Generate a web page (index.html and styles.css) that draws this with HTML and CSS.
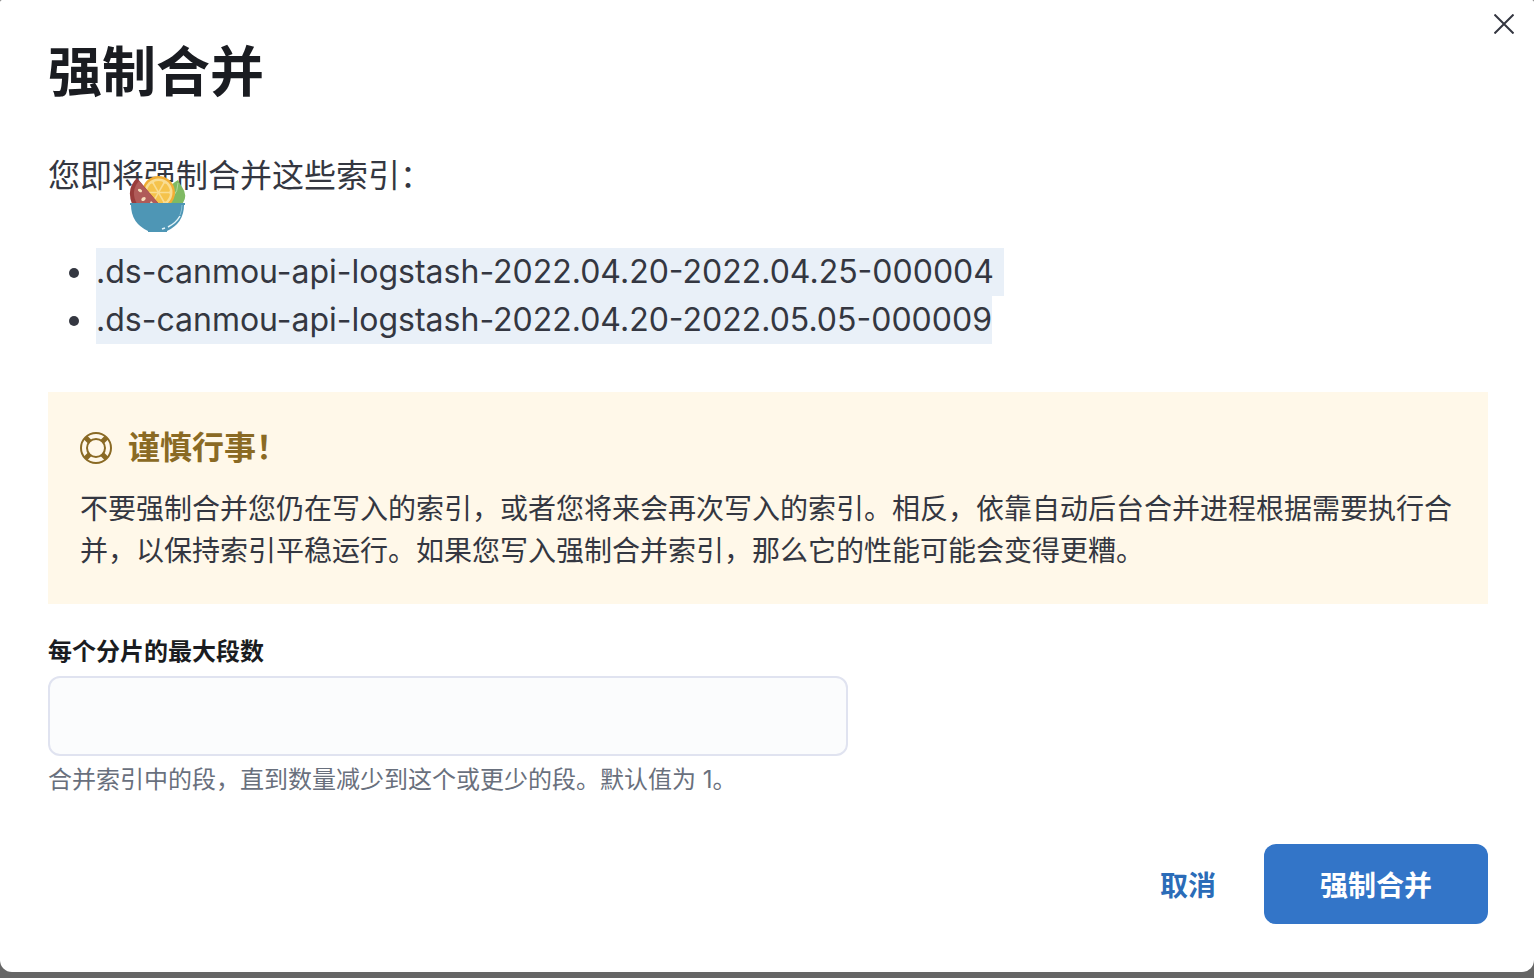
FILE: index.html
```html
<!DOCTYPE html>
<html lang="zh-CN">
<head>
    <meta charset="UTF-8">
    <title>强制合并</title>
    <link rel="stylesheet" href="styles.css">
</head>
<body>
    <form class="modal">
        <button type="button" class="close" aria-label="关闭">
            <svg width="20" height="20" viewBox="0 0 20 20" fill="none" stroke="#343741" stroke-width="2">
                <path d="M.5.5l19 19M19.5.5l-19 19"/>
            </svg>
        </button>
        <h1 class="title">强制合并</h1>
        <div class="intro">
            <p>您即将强制合并这些索引：</p>
            <svg class="bowl" width="58" height="58" viewBox="0 0 58 58">
                <path d="M40 28V14q2-5 9-9 2 4 4 7 6 8 1 16z" fill="#7fba63"/>
                <path d="M49 8q0 8-5 14" fill="none" stroke="#b5dba0" stroke-width="1"/>
                <circle cx="29.500" cy="17.500" r="16.500" fill="#f2ae34"/>
                <circle cx="29.500" cy="17.500" r="14" fill="#f9dd92"/>
                <g fill="#f5c34c">
                    <path id="slice" d="M29.500 16l-4.500-8q-.5-2 4.500-2t4.500 2z"/>
                    <use href="#slice" transform="rotate(60 29.500 17.500)"/>
                    <use href="#slice" transform="rotate(120 29.500 17.500)"/>
                    <use href="#slice" transform="rotate(180 29.500 17.500)"/>
                    <use href="#slice" transform="rotate(240 29.500 17.500)"/>
                    <use href="#slice" transform="rotate(300 29.500 17.500)"/>
                </g>
                <path d="M8 3l22 26H3Q-3 13 8 3z" fill="#993c3b"/>
                <path d="M10 6l20 23H8Q1 16 10 6z" fill="#b05b59"/>
                <g fill="#f6dfbd">
                    <ellipse cx="11" cy="15.500" rx="2.300" ry="1.400" transform="rotate(35 11 15.500)"/>
                    <ellipse cx="14.500" cy="24" rx="2.400" ry="1.700" transform="rotate(-35 14.500 24)"/>
                    <path d="M21 28l1-2 2 2z"/>
                </g>
                <path d="M1 28h55v2h-1q0 18-17 26v1H19v-1Q2 48 2 30H1z" fill="#4e96b5"/>
                <path d="M53 30q0 5-2 10" fill="none" stroke="#8bc1d5" stroke-width="1"/>
                <path d="M51 41q-4 7-12 11M36 53l-3 1" fill="none" stroke="#e4f4f8" stroke-width="1.500"/>
            </svg>
        </div>
        <ul class="indices">
            <li><span class="selected selected-break">.ds-canmou-api-logstash-2022.04.20-2022.04.25-000004</span></li>
            <li><span class="selected">.ds-canmou-api-logstash-2022.04.20-2022.05.05-000009</span></li>
        </ul>
        <section class="callout">
            <h2 class="callout-title">
                <svg width="32" height="32" viewBox="0 0 32 32" fill="none" stroke="#8a6a24" stroke-width="2">
                    <circle cx="16" cy="16" r="15"/>
                    <circle cx="16" cy="16" r="9"/>
                    <path d="M5.500 5.500l4.500 4.500M26.500 5.500l-4.500 4.500M5.500 26.500l4.500-4.500M26.500 26.500l-4.500-4.500" stroke-width="5"/>
                </svg>
                谨慎行事！
            </h2>
            <p>不要强制合并您仍在写入的索引，或者您将来会再次写入的索引。相反，依靠自动后台合并进程根据需要执行合并，以保持索引平稳运行。如果您写入强制合并索引，那么它的性能可能会变得更糟。</p>
        </section>
        <div class="field">
            <label for="segments">每个分片的最大段数</label>
            <input type="text" id="segments" aria-describedby="segments-help">
            <p class="help" id="segments-help">合并索引中的段，直到数量减少到这个或更少的段。默认值为 1。</p>
        </div>
        <div class="actions">
            <button type="button" class="btn btn-cancel">取消</button>
            <button type="submit" class="btn btn-confirm">强制合并</button>
        </div>
    </form>
</body>
</html>
```
FILE: styles.css
```css
* {
    box-sizing: border-box;
}
body {
    margin: 0;
    background-color: #666666;
    font-family: Inter, "Noto Sans CJK SC", sans-serif;
    font-size: 32px;
    line-height: 48px;
    color: #343741;
}
h1, h2, p, ul {
    margin: 0;
}
.modal {
    position: relative;
    padding: 40px 46px 48px 48px;
    background-color: #ffffff;
    border-radius: 2px 2px 12px 12px;
}
.close {
    position: absolute;
    top: 0;
    right: 6px;
    width: 48px;
    height: 48px;
    padding: 0;
    display: flex;
    align-items: center;
    justify-content: center;
    background: none;
    border: none;
    cursor: pointer;
}
.title {
    font-size: 54px;
    line-height: 66px;
    font-weight: 700;
    color: #1a1c21;
}
.intro {
    position: relative;
    margin: 46px 0 48px;
}
.bowl {
    position: absolute;
    top: 23px;
    left: 81px;
}
.indices {
    padding-left: 48px;
}
.selected {
    display: inline-block;
    vertical-align: top;
    background-color: #e9f0f8;
}
.selected-break {
    padding-right: 10px;
}
.callout {
    margin: 48px 0 32px;
    padding: 32px;
    background-color: #fff8e9;
    font-size: 28px;
    line-height: 42px;
}
.callout-title {
    display: flex;
    align-items: center;
    gap: 16px;
    margin-bottom: 16px;
    font-size: 32px;
    line-height: 48px;
    color: #8a6a24;
}
.field {
    display: flex;
    flex-direction: column;
    gap: 8px;
    font-size: 24px;
    line-height: 32px;
}
.field label {
    font-weight: 700;
    color: #1a1c21;
}
.field input {
    width: 100%;
    max-width: 800px;
    height: 80px;
    padding: 0 24px;
    font: inherit;
    color: #343741;
    background-color: #fbfcfd;
    border: 2px solid #e0e3f0;
    border-radius: 12px;
}
.help {
    color: #69707d;
}
.actions {
    display: flex;
    justify-content: flex-end;
    gap: 16px;
    margin-top: 48px;
}
.btn {
    height: 80px;
    font-family: inherit;
    font-size: 28px;
    font-weight: 700;
    border: none;
    border-radius: 12px;
    cursor: pointer;
}
.btn-cancel {
    padding: 0 32px;
    color: #2b6cb8;
    background: none;
}
.btn-confirm {
    padding: 0 56px;
    color: #ffffff;
    background-color: #3375c8;
}
```
